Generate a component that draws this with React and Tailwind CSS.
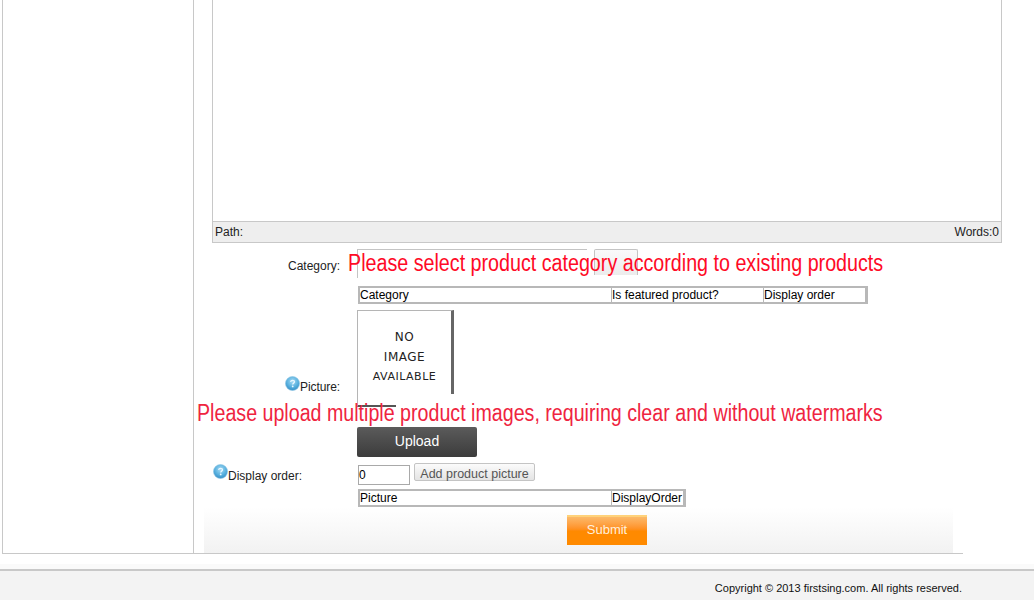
import React from 'react';

const HelpIcon = () => (
  <svg width="15" height="15" viewBox="0 0 15 15" className="shrink-0">
    <defs>
      <radialGradient id="helpBlue" cx="50%" cy="35%" r="70%">
        <stop offset="0%" stopColor="#a8dcf5" />
        <stop offset="60%" stopColor="#55aedd" />
        <stop offset="100%" stopColor="#2f86c0" />
      </radialGradient>
    </defs>
    <circle cx="7.5" cy="7.5" r="7" fill="url(#helpBlue)" stroke="#8fc6e4" strokeWidth="0.6" />
    <path d="M5.6 5.8c.2-1 1-1.5 2-1.5 1.1 0 1.9.6 1.9 1.5 0 1.3-1.8 1.3-1.8 2.6" fill="none" stroke="#eaf7ff" strokeWidth="1.3" />
    <circle cx="7.7" cy="10.4" r="0.9" fill="#eaf7ff" />
  </svg>
);

const GridTable = ({ columns, widthClass }) => (
  <table className={`table-fixed border-separate border-spacing-0 border-t-2 border-b-2 border-l-2 border-r-[3px] border-[#b8b8b8] text-[12px] leading-[14px] text-black ${widthClass}`}>
    <tbody>
      <tr>
        {columns.map((col, i) => (
          <td key={col.label} className={`${col.width} h-[14px] p-0 overflow-hidden whitespace-nowrap bg-white ${i < columns.length - 1 ? 'border-r border-[#b8b8b8]' : ''}`}>
            {col.label}
          </td>
        ))}
      </tr>
    </tbody>
  </table>
);

const App = () => {
  return (
    <div className="relative w-[1034px] h-[600px] overflow-hidden bg-white text-[12px] text-black" style={{ fontFamily: '"Liberation Sans", Arial, sans-serif' }}>
      <div className="flex ml-[2px] w-[961px] h-[554px] border-l border-b border-[#c8c8c8]">
        {/* left menu column, empty at this scroll position */}
        <div className="w-[191px] shrink-0 border-r border-[#c8c8c8]" />

        <div className="relative flex-1 min-w-0">
          {/* rich text editor */}
          <div className="ml-[18px] w-[790px] h-[243px] flex flex-col border-l border-r border-b border-[#c8c8c8]">
            <div className="flex-1 bg-white" />
            <div className="h-[21px] flex items-center justify-between px-[2px] border-t border-[#c8c8c8] bg-[#eeeeee] text-[12px] text-[#222]">
              <span>Path:</span>
              <span>Words:0</span>
            </div>
          </div>

          <div className="flex mt-[6px] h-[29px]">
            <div className="w-[163px] pr-[17px] pt-[10px] text-right text-[12px] leading-[14px] text-[#222]">Category:</div>
            <div className="w-[230px] h-[29px] border-l border-t border-[#c4c4c4] bg-white" />
            <div className="ml-[7px] w-[44px] h-[26px] rounded-t-[2px] border-l border-t border-r border-[#c4c4c4] bg-gradient-to-b from-[#fafafa] to-[#ececec]" />
          </div>

          <div className="ml-[164px] mt-[8px]">
            <GridTable
              widthClass="w-[510px]"
              columns={[
                { label: 'Category', width: 'w-[252px]' },
                { label: 'Is featured product?', width: 'w-[152px]' },
                { label: 'Display order', width: 'w-[101px]' },
              ]}
            />
          </div>

          <div className="flex mt-[6px] h-[97px]">
            <div className="w-[163px] flex justify-end items-end pr-[17px] pb-[13px]">
              <div className="mb-[3px]"><HelpIcon /></div>
              <span className="leading-[14px] text-[#222] tracking-[-0.1px]">Picture:</span>
            </div>
            <div className="w-[97px] h-[97px] flex flex-col items-center justify-center border-l border-t border-[#b5b5b5] border-r-[3px] border-r-[#666] border-b-2 border-b-[#555] text-[12px] leading-[20px] tracking-[0.5px] text-[#222] pb-[2px]" style={{ fontFamily: '"DejaVu Sans", sans-serif' }}>
              <span>NO</span>
              <span>IMAGE</span>
              <span className="text-[11px]">AVAILABLE</span>
            </div>
          </div>

          <button className="block ml-[163px] mt-[20px] w-[120px] h-[30px] pb-[2px] rounded-[2px] bg-gradient-to-b from-[#5b5b5b] to-[#3c3c3c] text-[14px] text-white">Upload</button>

          <div className="flex mt-[6px] h-[24px]">
            <div className="ml-[19px] w-[145px] flex items-start pt-[2px]">
              <div className="-mt-px"><HelpIcon /></div>
              <span className="mt-[4px] leading-[14px] text-[#222]">Display order:</span>
            </div>
            <div className="w-[52px] h-[20px] mt-[2px] border border-[#a9a9a9] bg-white text-[12px] leading-[18px]">0</div>
            <button className="ml-[4px] w-[121px] h-[18px] rounded-[2px] border border-[#c4c4c4] bg-gradient-to-b from-[#fbfbfb] to-[#e4e4e4] text-[12.5px] leading-[16px] pt-[2px] text-[#555]">Add product picture</button>
          </div>

          <div className="ml-[164px] mt-[2px]">
            <GridTable
              widthClass="w-[328px]"
              columns={[
                { label: 'Picture', width: 'w-[252px]' },
                { label: 'DisplayOrder', width: 'w-[71px]' },
              ]}
            />
          </div>

          {/* submit strip */}
          <div className="ml-[10px] w-[749px] h-[46px] pt-[8px] pl-[363px] bg-gradient-to-b from-white to-[#f2f2f2]">
            <button className="w-[80px] h-[30px] pb-[2px] border-t-2 border-[#ffd27a] bg-gradient-to-b from-[#fbb968] to-[#ff8a00] to-50% text-[13px] text-[#fff0dd]">Submit</button>
          </div>
        </div>
      </div>

      <div className="mt-[10px] h-[5px] bg-[#fafafa]" />
      <div className="h-[31px] pt-[6px] border-t-2 border-[#c8c8c8] bg-[#f3f3f3] flex justify-end items-center pr-[72px] text-[11px] text-[#111]">
        Copyright © 2013 firstsing.com. All rights reserved.
      </div>

      {/* annotations pasted over the form, squeezed horizontally like the original overlay */}
      <div className="absolute left-[396px] top-[394px] w-[100px] h-[14px] bg-white" />
      <div className="absolute left-[348px] top-[249px] origin-left scale-x-[0.856] text-[23px] leading-[28px] whitespace-nowrap text-[#ff0a26]">Please select product category according to existing products</div>
      <div className="absolute left-[197px] top-[399px] origin-left scale-x-[0.854] text-[23px] leading-[28px] whitespace-nowrap text-[#ef2440]">Please upload multiple product images, requiring clear and without watermarks</div>
    </div>
  );
};

export default App;
